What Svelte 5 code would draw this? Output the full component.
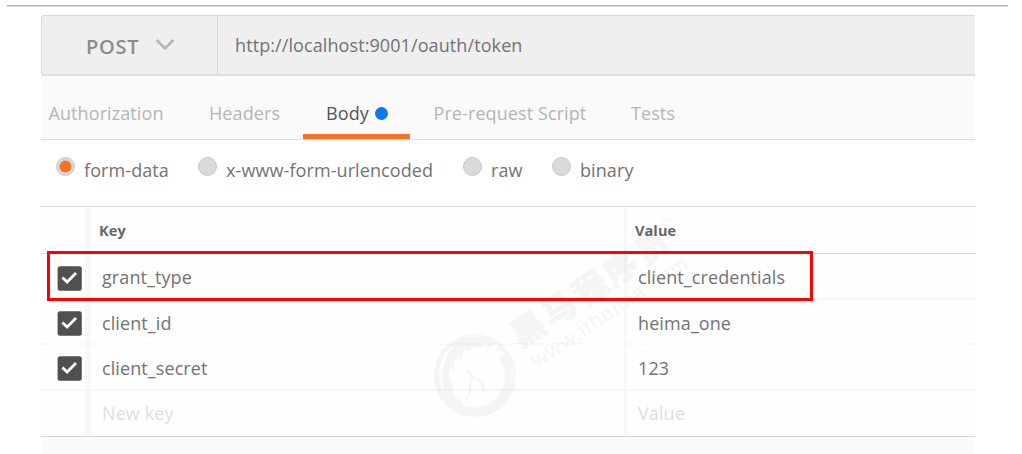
<script>
  const tabs = [
    { label: 'Authorization', cls: 'auth' },
    { label: 'Headers', cls: 'headers' },
    { label: 'Body', cls: 'active' },
    { label: 'Pre-request Script', cls: 'script' },
    { label: 'Tests', cls: 'tests' },
  ];
  const modes = [
    { label: 'form-data', checked: true, width: 142 },
    { label: 'x-www-form-urlencoded', checked: false, width: 265 },
    { label: 'raw', checked: false, width: 89 },
    { label: 'binary', checked: false, width: 100 },
  ];
  const rows = [
    { key: 'grant_type', value: 'client_credentials' },
    { key: 'client_id', value: 'heima_one' },
    { key: 'client_secret', value: '123' },
  ];
</script>

<main class="page">
  <div class="rule"></div>
  <div class="panel">
    <div class="request">
      <div class="method">
        <span>POST</span>
        <svg width="20" height="13" viewBox="0 0 20 13"><path d="M1.5 1.8 L10 10.3 L18.5 1.8" fill="none" stroke="#b4b4b4" stroke-width="2.6" /></svg>
      </div>
      <div class="url">http://localhost:9001/oauth/token</div>
    </div>
    <nav class="tabs">
      {#each tabs as tab}
        <div class="tab {tab.cls}">
          <span>{tab.label}</span>
          {#if tab.cls === 'active'}<i class="dot"></i>{/if}
        </div>
      {/each}
    </nav>
    <div class="modes">
      {#each modes as mode}
        <div class="mode" style="width: {mode.width}px">
          <i class="radio" class:checked={mode.checked}></i>
          <span>{mode.label}</span>
        </div>
      {/each}
    </div>
    <div class="table">
      <div class="row head">
        <div class="check"></div>
        <div class="key">Key</div>
        <div class="value">Value</div>
      </div>
      {#each rows as row}
        <div class="row">
          <div class="check">
            <svg width="25" height="25" viewBox="0 0 25 25"><rect x="0.6" y="0.3" width="24.2" height="24.4" rx="2.5" fill="#505050" /><path d="M5.4 11.6 L10.1 16 L19 7" fill="none" stroke="#fff" stroke-width="2.8" /></svg>
          </div>
          <div class="key">{row.key}</div>
          <div class="value">{row.value}</div>
        </div>
      {/each}
      <div class="row blank">
        <div class="check"></div>
        <div class="key">New key</div>
        <div class="value">Value</div>
      </div>
    </div>
    <div class="footer"></div>
  </div>

  <svg class="watermark" width="270" height="220" viewBox="425 205 270 220">
    <g transform="translate(425 325) scale(0.3333)" opacity="0.033">
      <path fill-rule="evenodd" d="M150 28 A123 124 0 1 1 149.9 28 Z M93 57 C42 83 28 155 57 203 C44 150 54 91 93 57 Z M75 122 L85 140 L89 106 L100 94 L106 104 L119 70 L127 82 L153 61 L151 77 L188 50 L187 70 L223 50 L215 72 L242 82 L221 96 C234 116 240 132 240 155 C238 207 201 243 155 247 C137 248 119 243 106 235 L115 228 C92 227 82 202 83 181 C72 161 69 145 75 122 Z" />
      <path fill="none" stroke="#000" stroke-width="6" d="M124 137 C147 145 144 159 136 174 C130 187 141 193 134 207 C131 214 126 216 120 218 M139 158 C163 158 174 176 178 199" />
    </g>
    <g fill="#000" opacity="0.033">
      <text class="cn" transform="translate(521 348) rotate(-33.4)">黑马程序员</text>
      <text class="site" transform="translate(537 368) rotate(-33.4)" textLength="183">www.itheima.com</text>
      <text class="tm" transform="translate(662 227) rotate(-33.4)">TM</text>
    </g>
  </svg>
  <div class="highlight"></div>
</main>

<style>
  :global(body) { background: #fff; }
  .page {
    position: relative;
    box-sizing: border-box;
    width: 1022px;
    height: 454px;
    padding-top: 5px;
    overflow: hidden;
    font-family: 'Open Sans', 'Noto Sans', sans-serif;
    font-size: 18px;
    letter-spacing: 0.09px;
    color: #737373;
    white-space: nowrap;
  }
  .page * { box-sizing: border-box; }
  .rule { height: 2px; width: 1001px; margin-left: 7px; background: #e0e0e0; border-top: 1px solid #aeaeae; }
  .panel { width: 934px; margin: 8px 0 0 41px; }
  .request {
    display: flex;
    height: 61px;
    background: #efefef;
    border: 1px solid #dadada;
    border-right: 0;
    border-bottom: 2px solid #dedede;
    border-radius: 3px 0 0 3px;
  }
  .method {
    display: flex;
    align-items: center;
    width: 176px;
    padding: 3px 0 0 44px;
    border-right: 1px solid #d9d9d9;
    font-size: 20px;
    letter-spacing: 0.7px;
    font-weight: 600;
    color: #8b8b8b;
  }
  .method span { width: 69px; }
  .method svg { margin-top: -5px; }
  .url { padding-left: 17px; line-height: 58px; }
  .tabs {
    display: flex;
    height: 64px;
    background: #fafafa;
    border-bottom: 1px solid #dedede;
    color: #b5b5b5;
  }
  .tab { display: flex; height: 63px; line-height: 74px; }
  .auth { width: 168px; padding-left: 7.5px; }
  .headers { width: 94px; }
  .active {
    width: 107px;
    padding-left: 23px;
    border-bottom: 5px solid #f77224;
    color: #555;
  }
  .dot { width: 13px; height: 13px; margin: 31px 0 0 6px; border-radius: 50%; background: #097bed; }
  .script { width: 221px; padding-left: 23.5px; }
  .modes { display: flex; height: 66px; padding-left: 15px; }
  .mode { display: flex; line-height: 61px; }
  .radio {
    width: 19px;
    height: 19px;
    margin: 17px 9px 0 0;
    border: 1px solid #c8c8c8;
    border-radius: 50%;
    background: #dadada;
  }
  .checked { background: radial-gradient(circle, #f77224 0 5.5px, #d8d8d8 6.3px); }
  .table { border-top: 1px solid #dadada; border-bottom: 1px solid #d8d8d8; }
  .row { display: flex; height: 45.4px; line-height: 46px; background: #fefefe; border-bottom: 2px solid #f7f7f7; }
  .row.head { height: 47.4px; line-height: 47px; border-bottom: 1px solid #dadada; font-size: 14.5px; font-weight: 700; color: #666; }
  .check { display: flex; align-items: center; width: 50px; padding: 4px 0 0 16px; border-right: 6px solid #f8f8f8; }
  .check svg { flex: none; }
  .key { width: 536px; padding-left: 11px; border-right: 3px solid #f8f8f8; }
  .value { padding-left: 11px; }
  .head .key { padding-left: 8px; }
  .head .value { padding-left: 8px; }
  .row.blank { height: 45.4px; line-height: 45px; border-bottom: 0; color: #dedede; }
  .footer { height: 30px; background: #fafafa; }
  .highlight {
    position: absolute;
    left: 47px;
    top: 251px;
    width: 766px;
    height: 50px;
    border: 3px solid #f00;
  }
  .watermark { position: absolute; left: 425px; top: 205px; }
  .cn { font-family: 'Noto Sans CJK SC', sans-serif; font-size: 33px; font-weight: 700; letter-spacing: 4px; stroke: #000; stroke-width: 1.4px; }
  .site { font-family: 'Liberation Sans', sans-serif; font-size: 21px; letter-spacing: 0; }
  .tm { font-family: 'Liberation Sans', sans-serif; font-size: 9px; }
</style>
